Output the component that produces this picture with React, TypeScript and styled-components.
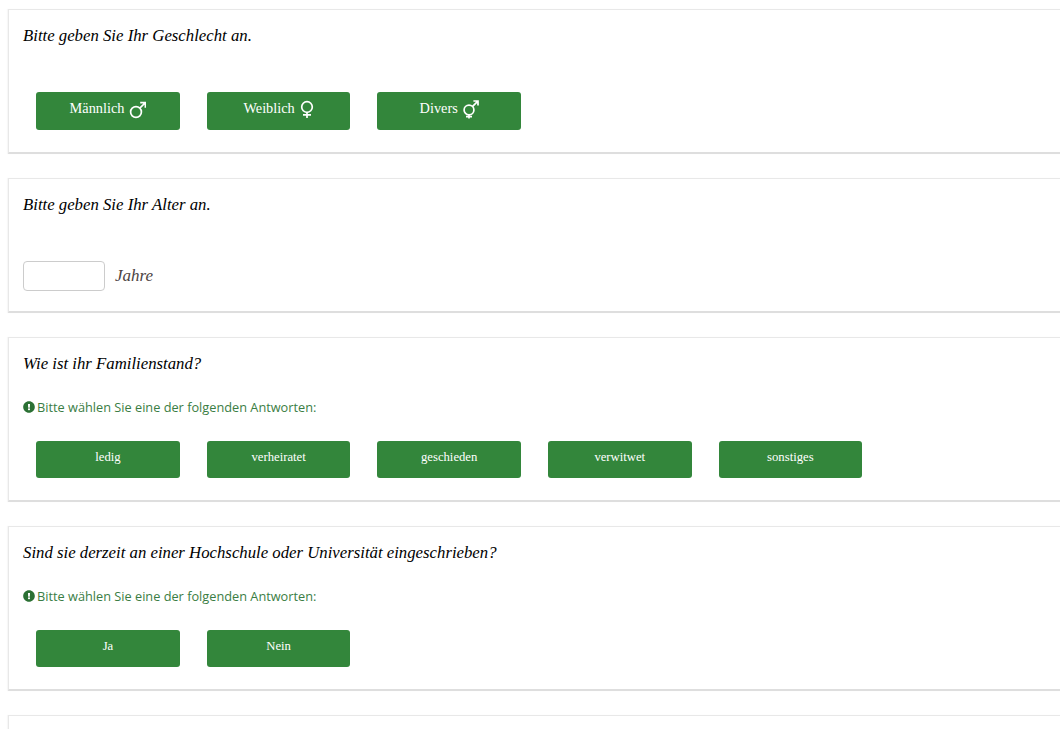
import React from 'react'
import styled, { createGlobalStyle } from 'styled-components'
import { FaExclamationCircle } from 'react-icons/fa'

const GlobalStyle = createGlobalStyle`
  html, body {
    margin: 0;
    height: 729px;
    overflow: hidden;
    background: #fff;
    font-family: "Liberation Serif", serif;
  }
`

const Page = styled.div`
  width: 1100px;
  height: 720px;
  padding: 9px 0 0 8px;
  display: flex;
  flex-direction: column;
  gap: 24px;
`

const Card = styled.section<{ $height: number }>`
  box-sizing: border-box;
  height: ${p => p.$height}px;
  flex: none;
  padding: 0 14px;
  background: #fff;
  border: 1px solid #e8e8e8;
  border-bottom: 2px solid #dedede;
  box-shadow: -1px 0 1px rgba(0, 0, 0, 0.03);
  display: flex;
  flex-direction: column;
`

const Question = styled.div`
  margin-top: 16px;
  height: 20px;
  font-size: 16.75px;
  line-height: 20px;
  font-style: italic;
  color: #000;
`

const Hint = styled.div`
  margin-top: 24px;
  height: 18px;
  display: flex;
  align-items: center;
  gap: 2.5px;
  font-family: "Open Sans", sans-serif;
  font-size: 12.75px;
  line-height: 18px;
  color: #3a7d44;

  svg {
    width: 12px;
    height: 12px;
    margin-left: -0.5px;
    color: #2b7034;
  }
`

const Options = styled.div<{ $top: number }>`
  margin-top: ${p => p.$top}px;
  display: grid;
  grid-template-columns: repeat(5, 170.6px);
  padding-left: 13.2px;
`

const Choice = styled.button<{ $large?: boolean }>`
  box-sizing: border-box;
  width: 143.6px;
  height: ${p => (p.$large ? 38 : 37)}px;
  padding: 0 0 ${p => (p.$large ? 5 : 4)}px;
  border: 0;
  border-radius: 3px;
  background: #33863b;
  color: #fff;
  font-family: "Liberation Serif", serif;
  font-size: ${p => (p.$large ? 14.3 : 12.7)}px;
  display: flex;
  align-items: center;
  justify-content: center;
  gap: 5px;
`

const AgeRow = styled.div`
  margin-top: 46px;
  display: flex;
  align-items: center;
  gap: 10px;
`

const AgeInput = styled.input`
  box-sizing: border-box;
  width: 82px;
  height: 30px;
  border: 1px solid #ccc;
  border-radius: 4px;
  background: #fff;
`

const Unit = styled.span`
  font-size: 17px;
  font-style: italic;
  color: #4d4444;
`

const GenderIcon = styled.svg<{ $width: number }>`
  width: ${p => p.$width}px;
  height: 20px;
  fill: none;
  stroke: #fff;
  stroke-width: 1.7;
  flex: none;
`

const Male = () => (
  <GenderIcon $width={17} viewBox="0 0 17 20">
    <circle cx="7" cy="13" r="5.4" />
    <path d="M10.8 9.2 16 4M11.2 3.6h5.2v5.2" />
  </GenderIcon>
)

const Female = () => (
  <GenderIcon $width={14} viewBox="0 0 14 20">
    <circle cx="7" cy="8" r="5.3" />
    <path d="M7 13.3V19M3 15.8h8" />
  </GenderIcon>
)

const Diverse = () => (
  <GenderIcon $width={16} viewBox="0 0 16 20">
    <circle cx="6" cy="11" r="4.9" />
    <path d="M9.4 7.6 14.6 2.4M10.4 2h4.6v4.6M6 15.9V19.6M3 17.6h6" />
  </GenderIcon>
)

const maritalOptions = ['ledig', 'verheiratet', 'geschieden', 'verwitwet', 'sonstiges']
const studyOptions = ['Ja', 'Nein']

const HintLine = () => (
  <Hint>
    <FaExclamationCircle />
    Bitte wählen Sie eine der folgenden Antworten:
  </Hint>
)

export default function App() {
  return (
    <>
      <GlobalStyle />
      <Page>
        <Card $height={145}>
          <Question>Bitte geben Sie Ihr Geschlecht an.</Question>
          <Options $top={46}>
            <Choice $large>Männlich <Male /></Choice>
            <Choice $large>Weiblich <Female /></Choice>
            <Choice $large>Divers <Diverse /></Choice>
          </Options>
        </Card>
        <Card $height={135}>
          <Question>Bitte geben Sie Ihr Alter an.</Question>
          <AgeRow>
            <AgeInput type="text" />
            <Unit>Jahre</Unit>
          </AgeRow>
        </Card>
        <Card $height={165}>
          <Question>Wie ist ihr Familienstand?</Question>
          <HintLine />
          <Options $top={25}>
            {maritalOptions.map(o => <Choice key={o}>{o}</Choice>)}
          </Options>
        </Card>
        <Card $height={165}>
          <Question>Sind sie derzeit an einer Hochschule oder Universität eingeschrieben?</Question>
          <HintLine />
          <Options $top={25}>
            {studyOptions.map(o => <Choice key={o}>{o}</Choice>)}
          </Options>
        </Card>
        <Card $height={40} />
      </Page>
    </>
  )
}
